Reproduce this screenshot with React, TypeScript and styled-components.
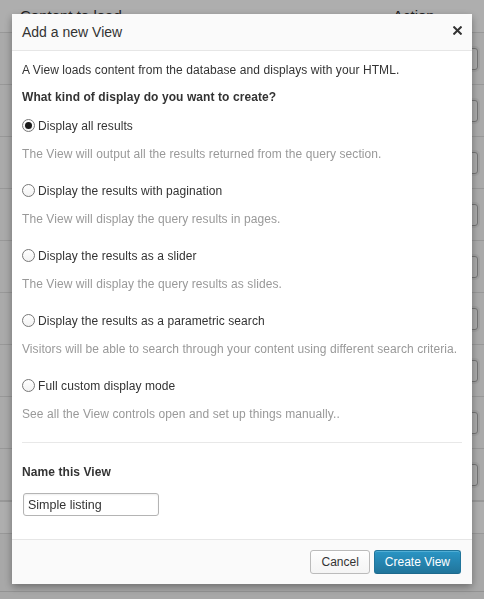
import React from "react";
import styled, { createGlobalStyle } from "styled-components";

const GlobalStyle = createGlobalStyle`
  html, body {
    margin: 0;
    padding: 0;
  }
  body {
    font-family: "Liberation Sans", Arial, sans-serif;
    font-size: 12px;
    color: #333;
    background: #f3f3f3;
  }
  * { box-sizing: border-box; }
`;

/* ---------- admin list page behind the modal ---------- */

const Page = styled.div`
  min-height: 599px;
  background: #f3f3f3;
  overflow: hidden;
`;

const ListHead = styled.div<{ $bottom?: boolean }>`
  height: 33px;
  display: grid;
  grid-template-columns: 1fr 91px;
  align-items: start;
  padding: 7px 0 0 20px;
  line-height: 17px;
  background: #fcfcfc;
  border-bottom: 1px solid #dcdcdc;
  ${(p) => (p.$bottom ? "border-top: 1px solid #dcdcdc;" : "")}
  font-size: 15px;
  color: #333;
`;

const ListRow = styled.div`
  height: 52px;
  display: flex;
  align-items: center;
  justify-content: flex-end;
  padding-right: 6px;
  border-bottom: 1px solid #dcdcdc;
  background: #f6f6f6;
`;

const RowButton = styled.span`
  width: 16px;
  height: 22px;
  border: 1px solid #a9a9a9;
  border-radius: 3px;
  background: #f7f7f7;
  box-shadow: 0 0 0 2px #e9e9e9;
`;

const PageFoot = styled.div`
  height: 58px;
  border-bottom: 1px solid #d6d6d6;
`;

/* ---------- modal ---------- */

const Overlay = styled.div`
  position: fixed;
  inset: 0;
  background: rgba(0, 0, 0, 0.31);
`;

const Dialog = styled.div`
  position: fixed;
  top: 14px;
  left: 12px;
  width: 460px;
  background: #fff;
  box-shadow: 0 3px 8px rgba(0, 0, 0, 0.35);
  display: flex;
  flex-direction: column;
`;

const Header = styled.div`
  height: 37px;
  display: flex;
  align-items: center;
  justify-content: space-between;
  padding: 0 10px 1px 10px;
  background: #fafafa;
  border-bottom: 1px solid #e6e6e6;
`;

const Title = styled.h1`
  margin: 0;
  font-size: 14px;
  font-weight: normal;
  color: #333;
`;

const CloseButton = styled.button`
  border: 0;
  background: none;
  padding: 0;
  width: 9px;
  height: 9px;
  display: flex;
  margin-top: -3px;
  cursor: pointer;
`;

const Body = styled.div`
  padding: 10px 10px 23px 10px;
`;

const Text = styled.p<{ $muted?: boolean; $bold?: boolean }>`
  margin: 0;
  line-height: 18px;
  font-size: 12px;
  letter-spacing: 0.08px;
  color: ${(p) => (p.$muted ? "#999" : "#333")};
  font-weight: ${(p) => (p.$bold ? "bold" : "normal")};
`;

const Intro = styled(Text)`
  margin-bottom: 9px;
`;

const Question = styled(Text)`
  margin-bottom: 9px;
`;

const Option = styled.div`
  margin-bottom: 17px;
  &:last-of-type {
    margin-bottom: 0;
  }
`;

const OptionLabel = styled.label`
  display: flex;
  align-items: center;
  height: 20px;
  padding-top: 1px;
  margin-bottom: 10px;
  font-size: 12px;
  letter-spacing: 0.08px;
  color: #333;
  cursor: pointer;
`;

const Radio = styled.input`
  appearance: none;
  -webkit-appearance: none;
  width: 13px;
  height: 13px;
  margin: 0 3px 0 0;
  border: 1px solid #777;
  border-radius: 50%;
  background: linear-gradient(#fff, #f2f2f2);
  display: grid;
  place-items: center;
  &:checked::before {
    content: "";
    width: 7px;
    height: 7px;
    border-radius: 50%;
    background: #1a1a1a;
  }
`;

const Divider = styled.hr`
  border: 0;
  border-top: 1px solid #e8e8e8;
  margin: 19px 0 20px;
`;

const NameLabel = styled(Text)`
  margin-bottom: 12px;
`;

const NameInput = styled.input`
  display: block;
  width: 136px;
  height: 23px;
  margin-left: 1px;
  padding: 0 4px;
  border: 1px solid #b4b4b4;
  border-radius: 3px;
  box-shadow: inset 0 1px 2px rgba(0, 0, 0, 0.07);
  font-family: "Liberation Sans", Arial, sans-serif;
  font-size: 12.5px;
  color: #333;
  outline: none;
`;

const Footer = styled.div`
  display: flex;
  justify-content: flex-end;
  gap: 4px;
  padding: 10px 11px 10px 10px;
  background: #fafafa;
  border-top: 1px solid #e6e6e6;
`;

const Button = styled.button<{ $primary?: boolean }>`
  height: 24px;
  padding: 0 10px;
  border-radius: 3px;
  font-family: "Liberation Sans", Arial, sans-serif;
  font-size: 12px;
  line-height: 22px;
  cursor: pointer;
  border: 1px solid ${(p) => (p.$primary ? "#21759b" : "#bbb")};
  border-bottom-color: ${(p) => (p.$primary ? "#1e6a8d" : "#bbb")};
  color: ${(p) => (p.$primary ? "#fff" : "#333")};
  background: ${(p) =>
    p.$primary
      ? "linear-gradient(to bottom, #2a95c5, #21759b)"
      : "linear-gradient(to bottom, #fefefe, #f4f4f4)"};
  box-shadow: ${(p) =>
    p.$primary ? "inset 0 1px 0 rgba(120, 200, 230, 0.5)" : "inset 0 1px 0 #fff"};
`;

const options = [
  {
    label: "Display all results",
    note: "The View will output all the results returned from the query section.",
  },
  {
    label: "Display the results with pagination",
    note: "The View will display the query results in pages.",
  },
  {
    label: "Display the results as a slider",
    note: "The View will display the query results as slides.",
  },
  {
    label: "Display the results as a parametric search",
    note: "Visitors will be able to search through your content using different search criteria.",
  },
  {
    label: "Full custom display mode",
    note: "See all the View controls open and set up things manually..",
  },
];

function CloseIcon() {
  return (
    <svg width="9" height="9" viewBox="0 0 9 9" aria-hidden="true">
      <path
        d="M1.2 1.2 L7.8 7.8 M7.8 1.2 L1.2 7.8"
        stroke="#333"
        strokeWidth="2"
        strokeLinecap="square"
      />
    </svg>
  );
}

export default function App() {
  const [choice, setChoice] = React.useState(0);
  const [name, setName] = React.useState("Simple listing");

  return (
    <>
      <GlobalStyle />
      <Page>
        <ListHead>
          <span>Content to load</span>
          <span>Action</span>
        </ListHead>
        {Array.from({ length: 9 }).map((_, i) => (
          <ListRow key={i}>
            <RowButton />
          </ListRow>
        ))}
        <ListHead $bottom>
          <span>Content to load</span>
          <span>Action</span>
        </ListHead>
        <PageFoot />
      </Page>
      <Overlay />
      <Dialog role="dialog" aria-label="Add a new View">
        <Header>
          <Title>Add a new View</Title>
          <CloseButton aria-label="Close">
            <CloseIcon />
          </CloseButton>
        </Header>
        <Body>
          <Intro>A View loads content from the database and displays with your HTML.</Intro>
          <Question $bold>What kind of display do you want to create?</Question>
          {options.map((o, i) => (
            <Option key={o.label}>
              <OptionLabel>
                <Radio
                  type="radio"
                  name="display"
                  checked={choice === i}
                  onChange={() => setChoice(i)}
                />
                {o.label}
              </OptionLabel>
              <Text $muted>{o.note}</Text>
            </Option>
          ))}
          <Divider />
          <NameLabel $bold>Name this View</NameLabel>
          <NameInput value={name} onChange={(e) => setName(e.target.value)} />
        </Body>
        <Footer>
          <Button>Cancel</Button>
          <Button $primary>Create View</Button>
        </Footer>
      </Dialog>
    </>
  );
}
